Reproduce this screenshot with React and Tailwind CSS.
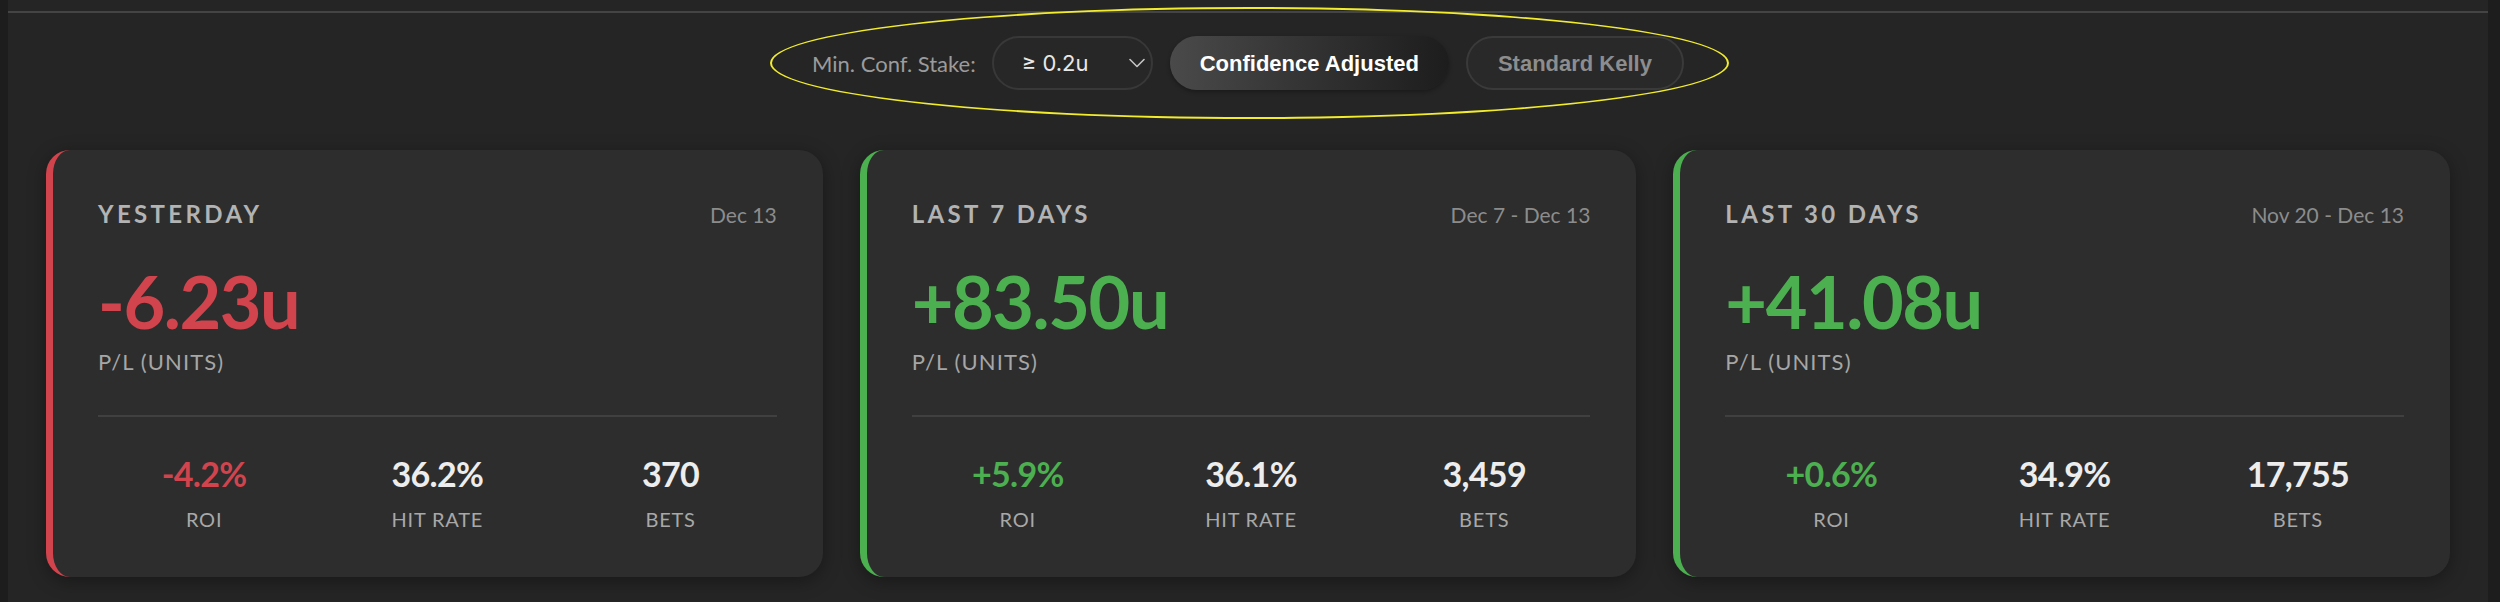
import React from "react";

const cards = [
  {
    title: "YESTERDAY",
    date: "Dec 13",
    value: "-6.23u",
    positive: false,
    roi: "-4.2%",
    hit: "36.2%",
    bets: "370",
  },
  {
    title: "LAST 7 DAYS",
    date: "Dec 7 - Dec 13",
    value: "+83.50u",
    positive: true,
    roi: "+5.9%",
    hit: "36.1%",
    bets: "3,459",
  },
  {
    title: "LAST 30 DAYS",
    date: "Nov 20 - Dec 13",
    value: "+41.08u",
    positive: true,
    roi: "+0.6%",
    hit: "34.9%",
    bets: "17,755",
  },
];

function Stat({ value, label, color }) {
  return (
    <div className="flex flex-col items-center">
      <div className={`text-[34px] leading-[34px] font-bold tracking-[-0.02em] ${color}`}>{value}</div>
      <div className="mt-[17.5px] text-[20px] leading-[20px] tracking-[0.04em] text-[#a8a8a8]">{label}</div>
    </div>
  );
}

function Card({ c }) {
  const accent = c.positive ? "text-[#4caf50]" : "text-[#d1444d]";
  const border = c.positive ? "border-[#4caf50]" : "border-[#d1444d]";
  return (
    <div
      className={`bg-[#2d2d2d] rounded-[24px] border-l-[7px] ${border} pl-[45px] pr-[46px] pt-[52px] pb-[48px] shadow-[0_4px_18px_rgba(0,0,0,0.35)]`}
    >
      <div className="flex items-baseline justify-between">
        <div className="text-[24px] leading-[24px] font-bold tracking-[0.14em] text-[#b3b3b3]">{c.title}</div>
        <div className="text-[21px] leading-[24px] text-[#8c8c8c]">{c.date}</div>
      </div>
      <div className={`mt-[38px] text-[72px] leading-[72px] font-bold tracking-[-0.02em] ${accent}`}>{c.value}</div>
      <div className="mt-[13.5px] text-[22px] leading-[22px] tracking-[0.05em] text-[#a6a6a6]">P/L (UNITS)</div>
      <div className="mt-[42.5px] h-[2px] bg-[#404040]" />
      <div className="mt-[40px] grid grid-cols-3 gap-[21px]">
        <Stat value={c.roi} label="ROI" color={accent} />
        <Stat value={c.hit} label="HIT RATE" color="text-[#ededed]" />
        <Stat value={c.bets} label="BETS" color="text-[#ededed]" />
      </div>
    </div>
  );
}

export default function App() {
  return (
    <div className="w-[2500px] h-[602px] flex bg-[#1c1c1c] overflow-hidden" style={{ fontFamily: "Lato, 'Noto Sans', sans-serif" }}>
      <div className="w-[8px] bg-[#1d1d1d]" />
      <main className="flex-1 bg-[#252525] pt-[11px]">
        <div className="h-[2px] bg-[#444444]" />
        <div className="mt-[23px] flex justify-center">
          <div className="relative flex items-center h-[54px]">
            <div className="absolute -left-[42px] -right-[45px] -top-[29px] -bottom-[29px] rounded-[50%] border-[2px] border-[#f2ec2f] pointer-events-none" />
            <span className="text-[22px] text-[#9b9b9b] mr-[16px]">Min. Conf. Stake:</span>
            <div className="w-[161px] h-[54px] rounded-full border-[2px] border-[#383838] bg-[#272727] flex items-center justify-between pl-[28px] pr-[6px]">
              <span className="text-[22px] text-[#e8e8e8]" style={{ fontFamily: "Inter, 'Liberation Sans', sans-serif" }}>≥ 0.2u</span>
              <svg width="16" height="10" viewBox="0 0 16 10" fill="none">
                <path d="M1 1.5 L8 8.5 L15 1.5" stroke="#c4c4c4" strokeWidth="1.6" strokeLinecap="round" strokeLinejoin="round" />
              </svg>
            </div>
            <button
              className="ml-[17px] h-[54px] px-[30px] rounded-full bg-gradient-to-r from-[#4a4a4a] to-[#1d1d1d] text-white text-[22px] font-bold shadow-[0_2px_4px_rgba(0,0,0,0.3)]"
              style={{ fontFamily: "'Liberation Sans', Arial, sans-serif" }}
            >
              Confidence Adjusted
            </button>
            <button
              className="ml-[17px] h-[54px] px-[30px] rounded-full border-[2px] border-[#3a3a3a] bg-[#292929] text-[#8d8d8d] text-[22px] font-bold"
              style={{ fontFamily: "'Liberation Sans', Arial, sans-serif" }}
            >
              Standard Kelly
            </button>
          </div>
        </div>
        <div className="mt-[60px] px-[38px] grid grid-cols-3 gap-[37px]">
          {cards.map((c) => (
            <Card key={c.title} c={c} />
          ))}
        </div>
      </main>
      <div className="w-[12px] bg-[#1d1d1d]" />
    </div>
  );
}
